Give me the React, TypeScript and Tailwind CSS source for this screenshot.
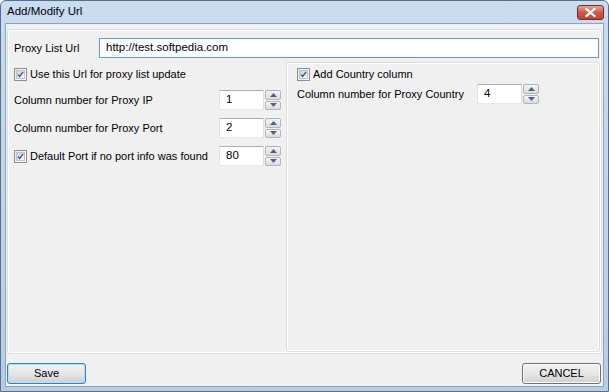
import React from "react";

const font = { fontFamily: '"Liberation Sans", Arial, sans-serif' };

const CheckBox = () => (
  <span className="inline-flex h-[13px] w-[13px] shrink-0 items-center justify-center border border-[#8e8f8f] bg-gradient-to-br from-[#e6e6e6] to-[#ffffff]">
    <span className="flex h-[9px] w-[9px] items-center justify-center border border-[#c3c3c3] bg-gradient-to-br from-[#cbcfd5] to-[#f6f6f6]">
      <svg width="9" height="9" viewBox="0 0 9 9">
        <path d="M1.2 4.6 L3.4 7 L7.8 1.2" fill="none" stroke="#2b4ea3" strokeWidth="1.6" />
      </svg>
    </span>
  </span>
);

const Spin = ({ value, width = "w-[45px]" }: { value: string; width?: string }) => (
  <div className="flex h-[20px] items-stretch">
    <div
      className={`${width} flex items-center border border-[#abadb3] border-l-[#e2e3ea] border-r-[#dbdfe6] border-b-[#e3e9ef] bg-white pl-[6px] text-[11.5px] text-black`}
    >
      {value}
    </div>
    <div className="ml-[1px] flex w-[16px] flex-col gap-[1px]">
      <div className="flex flex-1 items-center justify-center rounded-[2px] border border-[#b4b4b4] bg-gradient-to-b from-[#f4f4f4] to-[#dcdcdc]">
        <svg width="7" height="4" viewBox="0 0 7 4">
          <path d="M0 4 L3.5 0 L7 4 Z" fill="#4f6080" />
        </svg>
      </div>
      <div className="flex flex-1 items-center justify-center rounded-[2px] border border-[#b4b4b4] bg-gradient-to-b from-[#f4f4f4] to-[#dcdcdc]">
        <svg width="7" height="4" viewBox="0 0 7 4">
          <path d="M0 0 L3.5 4 L7 0 Z" fill="#4f6080" />
        </svg>
      </div>
    </div>
  </div>
);

const WinButton = ({ label, focused }: { label: string; focused?: boolean }) => (
  <button
    className={
      "flex h-[21px] w-[79px] items-center justify-center rounded-[3px] border text-[11px] text-black " +
      (focused
        ? "border-[#3c7fb1] shadow-[inset_0_0_0_1px_#a6e2f9] bg-gradient-to-b from-[#f2f2f2] via-[#e6e6e6] to-[#cfcfcf]"
        : "border-[#707070] shadow-[inset_0_0_0_1px_#fbfbfb] bg-gradient-to-b from-[#f2f2f2] via-[#e6e6e6] to-[#cfcfcf]")
    }
  >
    {label}
  </button>
);

export default function App() {
  return (
    <div
      className="flex h-[392px] w-[609px] flex-col whitespace-nowrap rounded-t-[6px] border border-[#5d6f85] bg-gradient-to-b from-[#c9dcf1] to-[#b6cde6] text-[11px]"
      style={font}
    >
      {/* title bar */}
      <div className="flex h-[22px] items-center justify-between pl-[6px] pr-[4px]">
        <span className="text-[11.5px] text-black">Add/Modify Url</span>
        <div className="mt-[1px] flex h-[15px] w-[27px] items-center justify-center rounded-[3px] border border-[#7a2d28] bg-gradient-to-b from-[#e2a597] via-[#c75b4c] to-[#c4442f]">
          <svg width="11" height="9" viewBox="0 0 11 9">
            <path d="M1.5 1 L9.5 8 M9.5 1 L1.5 8" stroke="#ffffff" strokeWidth="2.2" strokeLinecap="square" />
          </svg>
        </div>
      </div>

      {/* client area */}
      <div className="mx-[4px] mb-[4px] flex flex-1 flex-col border border-[#8fa4bb] bg-[#f0f0f0] px-[1px]">
        <div className="mt-[5px] flex h-[325px] flex-col rounded-[3px] border border-[#d5dfe5] shadow-[inset_0_0_0_1px_#ffffff]">
          {/* url row */}
          <div className="mt-[8px] flex items-center pl-[6px] pr-[2px]">
            <span className="w-[85px] text-black">Proxy List Url</span>
            <div className="flex h-[20px] flex-1 items-center border border-[#569de5] bg-white pl-[6px] text-[11.5px] text-black">
              http://test.softpedia.com
            </div>
          </div>

          <div className="mt-[4px] flex flex-1 pb-[1px]">
            {/* left column */}
            <div className="flex w-[278px] flex-col pl-[6px] pr-[5px] pt-[2px]">
              <div className="flex h-[20px] items-center gap-[3px]">
                <CheckBox />
                <span className="text-black">Use this Url for proxy list update</span>
              </div>
              <div className="mt-[6px] flex items-center justify-between">
                <span className="text-black">Column number for Proxy IP</span>
                <Spin value="1" />
              </div>
              <div className="mt-[8px] flex items-center justify-between">
                <span className="text-black">Column number for Proxy Port</span>
                <Spin value="2" />
              </div>
              <div className="mt-[8px] flex items-center justify-between">
                <div className="flex items-center gap-[3px]">
                  <CheckBox />
                  <span className="text-black">Default Port if no port info was found</span>
                </div>
                <Spin value="80" />
              </div>
            </div>

            {/* right panel */}
            <div className="mr-[1px] flex flex-1 flex-col rounded-[3px] border border-[#d5dfe5] pl-[10px] pt-[5px] shadow-[inset_0_0_0_1px_#ffffff]">
              <div className="flex h-[13px] items-center gap-[3px]">
                <CheckBox />
                <span className="text-black">Add Country column</span>
              </div>
              <div className="mt-[3px] flex items-center">
                <span className="w-[180px] text-black">Column number for Proxy Country</span>
                <Spin value="4" />
              </div>
            </div>
          </div>
        </div>

        {/* buttons */}
        <div className="mt-[9px] flex justify-between pr-[1px]">
          <WinButton label="Save" focused />
          <WinButton label="CANCEL" />
        </div>
      </div>
    </div>
  );
}
